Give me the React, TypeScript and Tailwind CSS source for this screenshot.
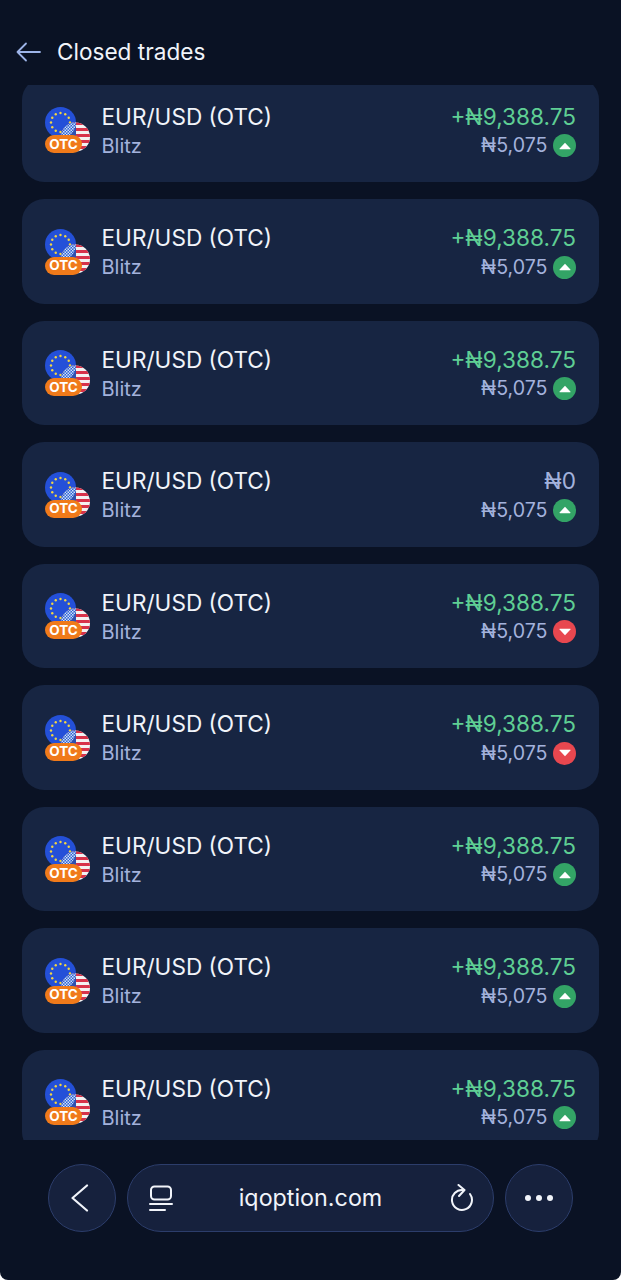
import { useId } from 'react'

type Trade = {
  profit: string
  direction: 'up' | 'down'
}

const trades: Trade[] = [
  { profit: '+₦9,388.75', direction: 'up' },
  { profit: '+₦9,388.75', direction: 'up' },
  { profit: '+₦9,388.75', direction: 'up' },
  { profit: '₦0', direction: 'up' },
  { profit: '+₦9,388.75', direction: 'down' },
  { profit: '+₦9,388.75', direction: 'down' },
  { profit: '+₦9,388.75', direction: 'up' },
  { profit: '+₦9,388.75', direction: 'up' },
  { profit: '+₦9,388.75', direction: 'up' },
]

const stars = [0, 30, 60, 90, 120, 150, 180, 210, 240, 270, 300, 330]

function PairIcon() {
  const id = useId().replace(/:/g, '')

  return (
    <div className="relative mt-[1px] h-[46px] w-[46px] shrink-0">
      <svg width="46" height="46" viewBox="0 0 46 46" className="block">
        <defs>
          <clipPath id={`${id}-us`}>
            <circle cx="30.5" cy="30" r="14.5" />
          </clipPath>
          <clipPath id={`${id}-eu`}>
            <circle cx="15.5" cy="15.5" r="15.5" />
          </clipPath>
          <pattern id={`${id}-check`} width="3" height="3" patternUnits="userSpaceOnUse">
            <rect width="3" height="3" fill="#2f62d8" />
            <rect width="1.5" height="1.5" fill="#cfe0f5" />
            <rect x="1.5" y="1.5" width="1.5" height="1.5" fill="#cfe0f5" />
          </pattern>
        </defs>
        <circle cx="15.5" cy="15.5" r="15.5" fill="#2450d8" />
        {stars.map((angle) => (
          <circle
            key={angle}
            cx={15.5 + 9.5 * Math.cos((angle * Math.PI) / 180)}
            cy={15.5 + 9.5 * Math.sin((angle * Math.PI) / 180)}
            r="1.2"
            fill="#f2d544"
          />
        ))}
        <g clipPath={`url(#${id}-us)`}>
          <rect x="16" y="15" width="30" height="30" fill="#f4f1f1" />
          <rect x="16" y="15" width="30" height="3" fill="#d8324a" />
          <rect x="16" y="21" width="30" height="3" fill="#d8324a" />
          <rect x="16" y="27" width="30" height="3" fill="#d8324a" />
          <rect x="16" y="33" width="30" height="3" fill="#d8324a" />
          <rect x="16" y="39" width="30" height="3" fill="#d8324a" />
          <rect x="16" y="15" width="15" height="15" fill="#2f4fb0" />
          <g clipPath={`url(#${id}-eu)`}>
            <rect x="14" y="14" width="20" height="20" fill={`url(#${id}-check)`} />
          </g>
        </g>
      </svg>
      <div className="absolute left-0 top-[28px] flex h-[18px] w-[37px] items-center justify-center rounded-full bg-[#f07a1a] text-[13.5px] font-bold leading-none text-white">
        OTC
      </div>
    </div>
  )
}

function DirectionBadge({ direction }: { direction: Trade['direction'] }) {
  return (
    <span
      className={`flex h-[23px] w-[23px] items-center justify-center rounded-full ${
        direction === 'up' ? 'bg-[#33a466]' : 'bg-[#e8474f]'
      }`}
    >
      <svg width="12" height="8" viewBox="0 0 12 8" fill="#ffffff">
        {direction === 'up' ? (
          <path d="M6 .8 11.4 6.4c.3.4.1.9-.4.9H1c-.5 0-.7-.5-.4-.9z" />
        ) : (
          <path d="M6 7.2.6 1.6C.3 1.2.5.7 1 .7h10c.5 0 .7.5.4.9z" />
        )}
      </svg>
    </span>
  )
}

function TradeCard({ trade }: { trade: Trade }) {
  return (
    <div className="flex h-[104.5px] shrink-0 items-center rounded-[22px] bg-[#172542] pl-[23px] pr-[23px]">
      <PairIcon />
      <div className="ml-[10.5px] flex-1 pt-[3px]">
        <div className="text-[22.6px] leading-[30px] text-[#f1f4fa]">EUR/USD (OTC)</div>
        <div className="mt-[-1px] text-[20px] leading-[30px] text-[#a3b2dc]">Blitz</div>
      </div>
      <div className="flex flex-col items-end pt-[3px]">
        <div
          className={`text-[22.6px] leading-[30px] ${
            trade.profit === '₦0' ? 'text-[#a3b2dc]' : 'text-[#5fcf94]'
          }`}
        >
          {trade.profit}
        </div>
        <div className="mt-[-1px] flex h-[30px] items-center gap-[5.5px] text-[19.6px] text-[#a3b2dc]">
          <span>₦5,075</span>
          <DirectionBadge direction={trade.direction} />
        </div>
      </div>
    </div>
  )
}

export default function App() {
  return (
    <div className="h-[1280px] w-[621px] overflow-hidden bg-white">
      <div className="flex h-[1280px] w-[621px] flex-col overflow-hidden rounded-b-[8px] bg-[#0a1224] font-['Inter',sans-serif]">
        <div className="flex h-[85px] shrink-0 items-center pl-[15.5px] pt-[19px]">
          <svg width="25" height="20" viewBox="0 0 25 20" fill="none" stroke="#9db4e8" strokeWidth="1.8" strokeLinecap="round" strokeLinejoin="round">
            <path d="M24 10H1.5M10 1.5 1.5 10l8.5 8.5" />
          </svg>
          <h1 className="ml-[16.5px] text-[22.6px] font-normal leading-none text-[#f1f4fa]">Closed trades</h1>
        </div>

        <div className="h-[1055px] shrink-0 overflow-hidden px-[22px]">
          <div className="mt-[-7.5px] flex flex-col gap-[17px]">
            {trades.map((trade, index) => (
              <TradeCard key={index} trade={trade} />
            ))}
          </div>
        </div>

        <div className="flex flex-1 items-start justify-center gap-[11px] pt-[24px]">
          <button className="flex h-[68px] w-[68px] items-center justify-center rounded-full border border-[#2c3d6b] bg-[#16213d]">
            <svg width="18" height="28" viewBox="0 0 18 28" fill="none" stroke="#f1f4fa" strokeWidth="2.2" strokeLinecap="round" strokeLinejoin="round" className="mr-[4px]">
              <path d="M16 1.5 1.5 14 16 26.5" />
            </svg>
          </button>

          <div className="flex h-[68px] w-[367px] items-center rounded-full border border-[#2c3d6b] bg-[#16213d] pl-[21px] pr-[19px]">
            <svg width="24" height="27" viewBox="0 0 24 27" fill="none" stroke="#f1f4fa" strokeWidth="2" strokeLinecap="round">
              <rect x="2" y="1.5" width="20" height="13" rx="3.5" />
              <path d="M1 19h22M1 25h15" />
            </svg>
            <span className="flex-1 pr-[2px] text-center text-[23.3px] leading-none text-[#f1f4fa]">iqoption.com</span>
            <svg width="24" height="28" viewBox="0 0 24 28" fill="none" stroke="#f1f4fa" strokeWidth="2" strokeLinecap="round" strokeLinejoin="round">
              <path d="M13 6A10 10 0 1 0 20 10" />
              <path d="M8.5 1 14.5 6 9 12" />
            </svg>
          </div>

          <button className="flex h-[68px] w-[68px] items-center justify-center gap-[5px] rounded-full border border-[#2c3d6b] bg-[#16213d]">
            <span className="h-[6px] w-[6px] rounded-full bg-[#f1f4fa]" />
            <span className="h-[6px] w-[6px] rounded-full bg-[#f1f4fa]" />
            <span className="h-[6px] w-[6px] rounded-full bg-[#f1f4fa]" />
          </button>
        </div>
      </div>
    </div>
  )
}
